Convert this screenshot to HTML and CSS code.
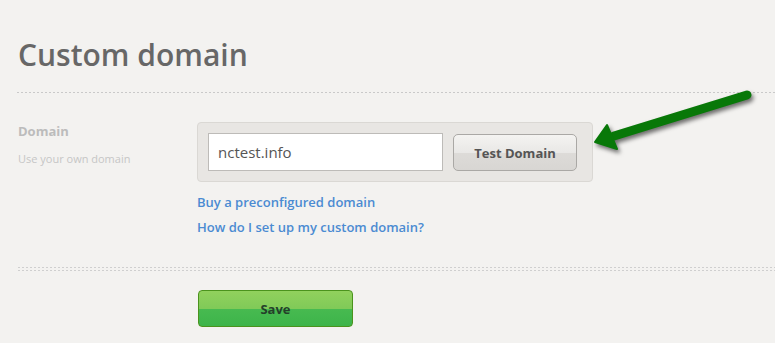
FILE: index.html
```html
<!DOCTYPE html>
<html lang="en">
<head>
    <meta charset="UTF-8">
    <meta name="viewport" content="width=device-width, initial-scale=1.0">
    <title>Custom domain</title>
    <link rel="stylesheet" href="styles.css">
</head>
<body>
    <div class="page">
        <h1 class="page-title">Custom domain</h1>
        <div class="divider"></div>

        <div class="form-row">
            <div class="form-label">
                <h3>Domain</h3>
                <p>Use your own domain</p>
            </div>
            <div class="form-field">
                <div class="domain-box">
                    <input type="text" class="domain-input" value="nctest.info">
                    <button class="test-btn">Test Domain</button>
                </div>
                <div class="help-links">
                    <a href="#">Buy a preconfigured domain</a>
                    <a href="#">How do I set up my custom domain?</a>
                </div>
            </div>
        </div>

        <div class="divider double"></div>

        <div class="form-actions">
            <button class="save-btn">Save</button>
        </div>

        <!-- pointer arrow drawn over the page -->
        <svg class="hint-arrow" width="180" height="80" viewBox="0 0 180 80">
            <g fill="#087808" stroke="#087808">
                <line x1="157" y1="10" x2="24" y2="51" stroke-width="9" stroke-linecap="round"/>
                <polygon points="5,57 17,40 27,64" stroke-width="2" stroke-linejoin="round"/>
            </g>
        </svg>
    </div>
</body>
</html>
```

FILE: styles.css
```css
* {
    margin: 0;
    padding: 0;
    box-sizing: border-box;
}

body {
    font-family: 'Open Sans', 'Liberation Sans', sans-serif;
    background: #f3f2f0;
    color: #666;
}

.page {
    position: relative;
    padding: 35px 0 0 17px;
    min-height: 343px;
}

.page-title {
    font-size: 30px;
    line-height: 40px;
    font-weight: 600;
    color: #676767;
    padding-left: 1px;
    margin-bottom: 17px;
}

.divider {
    height: 1px;
    background-image: linear-gradient(to right, #c9c9c9 2px, transparent 2px);
    background-size: 4px 1px;
}

.divider.double {
    height: 4px;
    background-image:
        linear-gradient(to right, #cfcfcf 2px, transparent 2px),
        linear-gradient(to right, #cfcfcf 2px, transparent 2px);
    background-size: 4px 1px, 4px 1px;
    background-position: 1px 0, 1px 3px;
    background-repeat: repeat-x;
}

.form-row {
    display: flex;
    margin-top: 29px;
    margin-bottom: 27px;
}

.form-label {
    width: 180px;
    padding-left: 1px;
}

.form-label h3 {
    font-size: 13px;
    line-height: 18px;
    font-weight: 700;
    color: #bcbcbc;
}

.form-label p {
    font-size: 11px;
    line-height: 16px;
    color: #c6c6c6;
    margin-top: 11px;
}

.domain-box {
    display: flex;
    align-items: flex-start;
    gap: 10px;
    width: 396px;
    padding: 10px 15px 10px 10px;
    background: #e8e6e3;
    border: 1px solid #dad8d4;
    border-radius: 4px;
}

.domain-input {
    width: 235px;
    height: 38px;
    padding: 0 9px;
    font-family: inherit;
    font-size: 15px;
    color: #555;
    background: #fff;
    border: 1px solid #bdbbb8;
    outline: none;
}

.test-btn {
    width: 124px;
    height: 37px;
    margin-top: 1px;
    font-family: inherit;
    font-size: 13px;
    font-weight: 700;
    color: #555;
    background: linear-gradient(#f4f3f1, #e9e8e6 50%, #dddbd8 52%, #d8d6d3);
    border: 1px solid #aaa8a5;
    border-radius: 5px;
    cursor: pointer;
}

.help-links {
    display: flex;
    flex-direction: column;
    margin-top: 8px;
}

.help-links a {
    font-size: 13px;
    line-height: 25px;
    font-weight: 600;
    color: #4b8bd2;
    text-decoration: none;
}

.form-actions {
    padding-left: 181px;
    margin-top: 19px;
}

.save-btn {
    width: 155px;
    height: 37px;
    font-family: inherit;
    font-size: 13px;
    font-weight: 700;
    color: #24402a;
    background: linear-gradient(#91d15d, #80ca58 50%, #47ba50 52%, #3db44a);
    border: 1px solid #4b931d;
    border-radius: 4px;
    cursor: pointer;
}

.hint-arrow {
    position: absolute;
    left: 590px;
    top: 85px;
    overflow: visible;
    filter: drop-shadow(2px 3px 2px rgba(0, 0, 0, 0.55));
}
```
